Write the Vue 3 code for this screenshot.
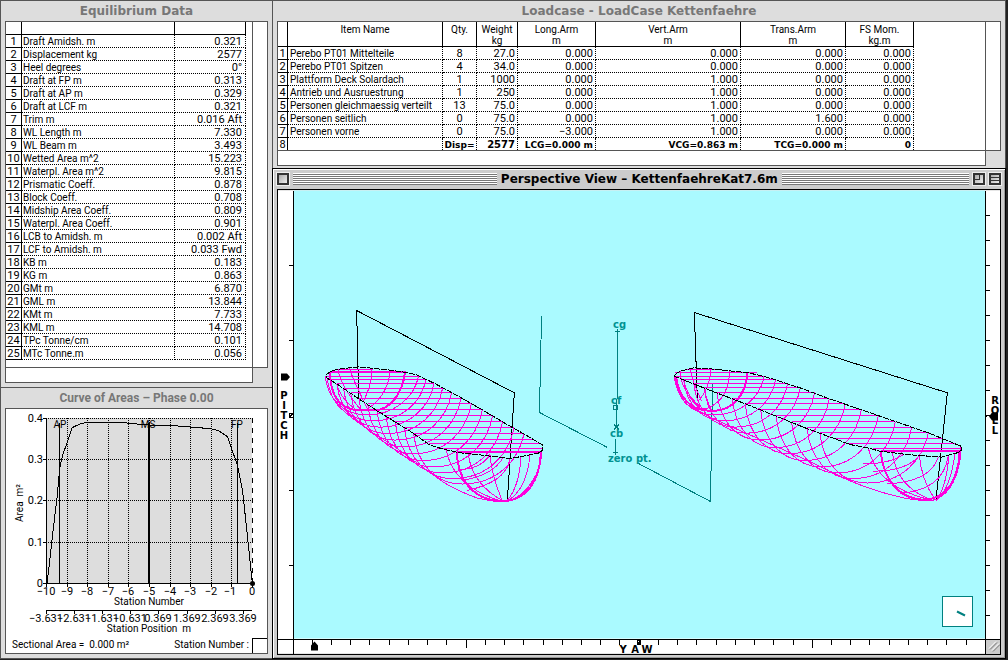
<script setup>
const equilibrium = [
  ['Draft Amidsh. m', '0.321'], ['Displacement kg', '2577'], ['Heel degrees', '0°'],
  ['Draft at FP m', '0.313'], ['Draft at AP m', '0.329'], ['Draft at LCF m', '0.321'],
  ['Trim m', '0.016 Aft'], ['WL Length m', '7.330'], ['WL Beam m', '3.493'],
  ['Wetted Area m^2', '15.223'], ['Waterpl. Area m^2', '9.815'], ['Prismatic Coeff.', '0.878'],
  ['Block Coeff.', '0.708'], ['Midship Area Coeff.', '0.809'], ['Waterpl. Area Coeff.', '0.901'],
  ['LCB to Amidsh. m', '0.002 Aft'], ['LCF to Amidsh. m', '0.033 Fwd'], ['KB m', '0.183'],
  ['KG m', '0.863'], ['GMt m', '6.870'], ['GML m', '13.844'], ['KMt m', '7.733'],
  ['KML m', '14.708'], ['TPc Tonne/cm', '0.101'], ['MTc Tonne.m', '0.056'],
]

const loadHead = [
  ['Item Name', ''], ['Qty.', ''], ['Weight', 'kg'], ['Long.Arm', 'm'],
  ['Vert.Arm', 'm'], ['Trans.Arm', 'm'], ['FS Mom.', 'kg.m'],
]
const loads = [
  ['Perebo PT01 Mittelteile', '8', '27.0', '0.000', '0.000', '0.000', '0.000'],
  ['Perebo PT01 Spitzen', '4', '34.0', '0.000', '0.000', '0.000', '0.000'],
  ['Plattform Deck Solardach', '1', '1000', '0.000', '1.000', '0.000', '0.000'],
  ['Antrieb und Ausruestrung', '1', '250', '0.000', '1.000', '0.000', '0.000'],
  ['Personen gleichmaessig verteilt', '13', '75.0', '0.000', '1.000', '0.000', '0.000'],
  ['Personen seitlich', '0', '75.0', '0.000', '1.000', '1.600', '0.000'],
  ['Personen vorne', '0', '75.0', '−3.000', '1.000', '0.000', '0.000'],
  ['', 'Disp=', '2577', 'LCG=0.000 m', 'VCG=0.863 m', 'TCG=0.000 m', '0'],
]

const gridX = [67, 87, 108, 128, 149, 170, 190, 211, 231]
const gridY = [[418, '0.4'], [459, '0.3'], [500, '0.2'], [542, '0.1'], [583, '0']]
const stations = [[46, '−10'], [67, '−9'], [87, '−8'], [108, '−7'], [128, '−6'], [149, '−5'], [170, '−4'], [190, '−3'], [211, '−2'], [230, '−1'], [252, '0']]
const positions = [[46, '−3.631'], [74, '−2.631'], [102, '−1.631'], [130, '−0.631'], [158, '0.369'], [187, '1.369'], [215, '2.369'], [243, '3.369']]

const yawTicks = Array.from({ length: 35 }, (_, i) => ({ x: Math.round(311.8 + i * 19.23), long: i === 8 || i === 26 }))
const pitchTicks = [264, 339, 489, 564]
const rollTicks = [214, 239, 264, 289, 314, 339, 364, 389, 439, 464, 489, 514, 539, 564, 589, 614]

/* One transverse section: a U hung between the port and starboard deck edges. */
function section(l, r, y, d) {
  const w = r - l
  return `M${r} ${y}C${r - 0.05 * w} ${y + 0.55 * d} ${l + 0.75 * w} ${y + d} ${l + 0.44 * w} ${y + d}` +
    `C${l + 0.2 * w} ${y + d} ${l + 0.03 * w} ${y + 0.6 * d} ${l} ${y}`
}
function hullMesh(slopeL, xL, yL, tops) {
  const depth = i => 116 + i * 2.3 + 20 * Math.sin(Math.PI * i / 13)
  const us = tops.map(([x, y], i) => section(xL + (y - yL) * slopeL, x, y, depth(i)))
  const deck = tops.map(([x, y]) => `M${xL + (y - yL) * slopeL} ${y}H${x}`)
  return us.slice(0, 12).join('') + deck.join('')
}

const hulls = [
  {
    at: 'translate(310 300) scale(.33333)',
    mesh: hullMesh(1.535, 50, 230, [[326, 227], [348, 238], [372, 250], [398, 263], [425, 277], [453, 293], [484, 310], [517, 328], [548, 346], [578, 364], [612, 382], [642, 400], [666, 416], [690, 430]]),
    extra: 'M75 208H190M385 445H697' +
      'M85 207Q88 250 150 325M118 203Q130 240 175 330M185 204Q188 250 160 302M240 210Q234 290 165 330M80 250Q90 290 130 322' +
      'M408 446Q430 560 575 602M475 460Q485 550 580 602M540 462Q544 520 575 597M540 462Q515 505 445 508M600 474Q590 545 470 570M633 468Q628 560 590 602M660 463Q650 570 590 602M580 470Q550 525 455 540',
    keel: 'M50 225Q60 300 100 330Q150 375 245 432L400 545Q450 575 500 592Q560 607 590 603Q640 590 668 540Q695 500 695 452',
    thick: 'M60 216H285C277 280 240 329 190 330H140C85 320 62 285 60 216M440 455H695M440 455C445 550 500 602 580 602C650 600 690 540 693 455',
    outline: 'M50 222L60 214L80 207L118 202L146 199L185 203L240 209L290 216L320 223L380 252L450 290L515 327L605 380L650 405L697 433V450L685 458L640 467L600 474L550 468L500 462L450 457L400 446L360 434L300 392L205 333L145 294L80 250L50 232Z',
    frame: 'M146 294L140 30L613 277L592 600',
  },
  {
    at: 'translate(660 300) scale(.33333)',
    mesh: hullMesh(2.57, 45, 228, [[313, 227], [347, 238], [383, 250], [421, 262], [464, 277], [508, 295], [556, 310], [604, 328], [655, 346], [706, 364], [755, 382], [805, 397], [850, 415], [885, 430]]),
    extra: 'M80 207H170M45 217H290M640 445H905' +
      'M60 212Q66 280 125 328M90 205Q100 250 125 302M152 204Q152 260 115 302M209 210Q206 310 125 328M72 240Q80 290 130 325M135 265Q135 290 155 330' +
      'M625 443Q650 560 810 598M697 456Q710 560 815 598M778 465Q785 540 825 597M778 465Q740 512 640 512M835 470Q810 545 680 550M866 466Q860 560 828 600M885 460Q870 570 828 600M730 462Q690 490 610 490M865 465Q850 570 720 578',
    keel: 'M45 225Q55 300 90 317Q150 352 240 390L450 483L560 537Q650 575 730 592Q790 604 825 598Q870 580 890 520Q903 480 903 440',
    thick: 'M48 226C55 290 90 330 150 331C220 335 258 280 262 217M662 453H903M662 453C670 530 710 598 800 598C860 590 895 540 899 453',
    outline: 'M45 222L60 212L90 205L100 202L152 205L265 217L313 228L347 238L420 262L508 295L605 328L706 363L805 397L905 438V448L895 456L845 470L740 462L660 452L625 443L570 432L525 415L435 382L346 346L256 310L172 278L100 250L45 228Z',
    frame: 'M112 298L103 36L862 277L828 598',
  },
]
</script>

<template>
  <main class="desktop">
    <div class="column">
      <section class="window">
        <h2 class="title">Equilibrium Data</h2>
        <div class="sheet">
          <div class="sheet-main equil">
            <table>
              <colgroup><col class="c16"><col><col class="c71"></colgroup>
              <thead><tr><th></th><th></th><th></th></tr></thead>
              <tbody>
                <tr v-for="(row, i) in equilibrium" :key="row[0]">
                  <th scope="row">{{ i + 1 }}</th><td>{{ row[0] }}</td><td class="num">{{ row[1] }}</td>
                </tr>
              </tbody>
            </table>
          </div>
          <div class="sheet-right"></div>
          <div class="sheet-bottom"></div>
        </div>
      </section>

      <section class="window curve">
        <h2 class="title narrow">Curve of Areas – Phase 0.00</h2>
        <div class="chart-box">
          <svg class="chart" viewBox="6 409 261 229" role="img" aria-label="Curve of areas">
            <rect x="46" y="418" width="206" height="165" fill="#ddd" />
            <g class="ink" stroke-dasharray="1 1">
              <path v-for="x in gridX" :key="x" :d="`M${x + 0.5} 418V583`" />
              <path v-for="g in gridY.slice(0, 4)" :key="g[0]" :d="`M46 ${g[0] + 0.5}H252`" />
            </g>
            <g class="ink">
              <path d="M46.5 418V583.5H253M59.5 423V583M237.5 423V583" />
              <path d="M149 423V583" stroke-width="2" />
              <path v-for="g in gridY" :key="g[0]" :d="`M43 ${g[0] + 0.5}H46`" />
              <path v-for="s in [46, ...gridX, 252]" :key="s" :d="`M${s + 0.5} 583V587`" />
              <path d="M252.5 418V583" stroke-dasharray="5 5" />
              <path d="M46 610.5H252" />
              <path v-for="p in positions" :key="p[0]" :d="`M${p[0] + 0.5} 610V614`" />
              <path transform="translate(0 385) scale(.33333)" vector-effect="non-scaling-stroke"
                d="M141 595L150 520L160 430L172 330L179 250L188 210L203 168L216 128L240 117L262 112H360L400 116L445 120L510 121L570 126L632 131L655 137L683 155L697 197L712 240L728 320L742 450L757 595" />
            </g>
            <circle cx="252.5" cy="583.5" r="2.5" />
            <text v-for="g in gridY" :key="g[1]" class="digits" x="43" :y="g[0] + 4" text-anchor="end">{{ g[1] }}</text>
            <g text-anchor="middle">
              <text x="60" y="428">AP</text><text x="148" y="428">MS</text><text x="237" y="428">FP</text>
              <text v-for="s in stations" :key="s[1]" class="digits" :x="s[0]" y="595">{{ s[1] }}</text>
              <text v-for="p in positions" :key="p[1]" class="digits" :x="p[0]" y="622">{{ p[1] }}</text>
              <text x="149" y="605">Station Number</text>
              <text x="149" y="632">Station Position&nbsp; m</text>
              <text transform="translate(23 503) rotate(-90)">Area&nbsp; m²</text>
            </g>
          </svg>
          <div class="readout">
            <span class="area">Sectional Area =&nbsp; 0.000 m²</span>
            <label for="station">Station Number :</label>
            <input id="station" type="text">
          </div>
        </div>
      </section>
    </div>

    <div class="column">
      <section class="window load">
        <h2 class="title">Loadcase - LoadCase Kettenfaehre</h2>
        <div class="sheet">
          <div class="sheet-main">
            <table class="loads">
              <colgroup><col class="c10"><col class="c155"><col class="c34"><col class="c41"><col class="c78"><col class="c145"><col class="c105"><col class="c68"></colgroup>
              <thead>
                <tr><th></th><th v-for="h in loadHead" :key="h[0]">{{ h[0] }}<br>{{ h[1] }}</th></tr>
              </thead>
              <tbody>
                <tr v-for="(row, i) in loads" :key="i">
                  <th scope="row">{{ i + 1 }}</th>
                  <td v-for="(c, j) in row" :key="j" :class="{ num: j > 1, qty: j === 1 }">{{ c }}</td>
                </tr>
              </tbody>
            </table>
          </div>
          <div class="sheet-right"></div>
          <div class="sheet-bottom"></div>
        </div>
      </section>

      <section class="persp">
        <header class="bar">
          <button class="box" aria-label="Close"></button>
          <i class="stripes wide"></i>
          <h2>Perspective View – KettenfaehreKat7.6m</h2>
          <i class="stripes"></i>
          <button class="box zoom" aria-label="Zoom"></button>
          <button class="box shade" aria-label="Collapse"></button>
        </header>
        <div class="view">
          <svg viewBox="278 190 722 463" role="img" aria-label="Perspective view of both hulls">
            <rect x="278" y="190" width="722" height="463" fill="#fff" />
            <rect x="294" y="190" width="691" height="448" fill="#aafaff" />
            <rect x="986" y="639" width="15" height="15" fill="#ccc" />
            <path class="ink" d="M293.5 190V653M278 638.5H1000M985.5 190V653" />
            <g class="ink">
              <path v-for="t in yawTicks" :key="t.x" :d="`M${t.x + 0.5} 639V${t.long ? 647 : 644}`" />
              <path v-for="y in pitchTicks" :key="y" :d="`M289 ${y + 0.5}H293`" />
              <path v-for="y in rollTicks" :key="y" :d="`M986 ${y + 0.5}H990`" />
              <path d="M289.5 412.5H293V416.5H289.5ZM290 416L293 413M637.5 639.5H640.5V643.5H637.5ZM638 643L641 640M986 416V414.5H990" />
            </g>
            <path d="M281 373H287L290 376.5L287 380H281ZM311 650V645L314.5 641L318 645V650ZM998 412V420H992L989 416L992 412Z" />
            <g class="tag" text-anchor="middle">
              <text v-for="(c, i) in 'PITCH'" :key="i" x="284" :y="398 + i * 10">{{ c }}</text>
              <text v-for="(c, i) in 'ROLL'" :key="i" x="995" :y="403 + i * 10">{{ c }}</text>
              <text x="623" y="652">Y</text><text x="635" y="652">A</text><text x="647" y="652">W</text>
            </g>

            <g class="teal">
              <path d="M541.5 316L539.5 412L607.5 447M638.5 463L710.5 501L712.5 384" />
              <path d="M617.5 331V372L616.5 427M615.5 438V449M615 330.5H620M617.5 328V333M613.5 404.5H617.5V408.5H613.5ZM614 424L619 429M619 424L614 429M613 451.5H618M615.5 449V454" />
            </g>
            <g class="mark">
              <text x="613" y="327">cg</text><text x="611" y="403">cf</text>
              <text x="610" y="436">cb</text><text x="608" y="461">zero pt.</text>
            </g>

            <g v-for="h in hulls" :key="h.at" class="hull" :transform="h.at">
              <path class="black" :d="h.frame" />
              <path :d="h.mesh" /><path :d="h.extra" /><path :d="h.keel" />
              <path class="bold" :d="h.thick" />
              <path class="black edge" :d="h.outline" />
            </g>

            <rect class="teal inset" x="942.5" y="595.5" width="30" height="30" />
            <path d="M957 611L965 615" stroke="#008080" stroke-width="2" />
            <path d="M989 648L996 641M992 650L999 643" stroke="#fff" stroke-width="1" />
            <path d="M990 649L997 642M993 651L1000 644" stroke="#777" stroke-width="1" />
          </svg>
        </div>
      </section>
    </div>
  </main>
</template>

<style>
body { margin: 0; background: #222; }
</style>

<style scoped>
.desktop {
  display: grid;
  grid-template-columns: 272px minmax(0, 1fr);
  min-height: 100vh;
  box-sizing: border-box;
  padding: 0 2px 2px 0;
  background: #222;
  color: #000;
  font: 10px/12px Roboto, "Liberation Sans", sans-serif;
}
.column { display: flex; flex-direction: column; min-width: 0; }
.window {
  box-sizing: border-box;
  background: #ddd;
  border: solid #555;
  border-width: 1px 0 0 1px;
  padding: 0 4px 4px;
}
.load { border-right-width: 1px; padding-bottom: 2px; }
.title {
  margin: 0;
  height: 20px;
  text-align: center;
  color: #777;
  font: bold 12px/20px "DejaVu Sans", sans-serif;
}
.narrow { font: bold 12px/20px Roboto, sans-serif; }

.sheet { display: grid; grid-template-columns: minmax(0, 1fr) 15px; grid-template-rows: auto 15px; }
.sheet > div { background: #fff; border: 0 solid #555; }
.sheet > .sheet-main { border-width: 1px; }
.sheet > .equil { padding: 0 6px 7px 0; }
.sheet > .sheet-right { border-width: 1px 1px 1px 0; }
.sheet > .sheet-bottom { border-width: 0 1px 1px; }

table { border-collapse: separate; border-spacing: 0; table-layout: fixed; width: 100%; }
.loads { width: 636px; }
.c16 { width: 16px; } .c71 { width: 71px; } .c10 { width: 10px; } .c155 { width: 155px; }
.c34 { width: 34px; } .c41 { width: 41px; } .c78 { width: 78px; } .c145 { width: 145px; }
.c105 { width: 105px; } .c68 { width: 68px; }
th, td {
  box-sizing: border-box;
  height: 13px;
  padding: 2px 0 0;
  white-space: nowrap;
  font-weight: normal;
  line-height: 10px;
  border: solid #000;
  border-width: 0 1px 1px 0;
}
thead th { vertical-align: top; line-height: 11px; }
tbody th { font-size: 11px; text-align: center; }
td { border-style: dotted; text-align: left; padding-left: 1px; }
.loads td { padding-left: 2px; }
td.num { font-size: 11px; text-align: right; padding-right: 3px; padding-left: 0; }
.loads td.num { padding-left: 0; padding-right: 2px; }
.loads td.qty { font-size: 11px; text-align: center; padding-left: 0; }
.loads tbody tr:last-child > * { height: 12px; border-bottom: 0; }
.loads tbody tr:last-child td { font: bold 9px/10px "DejaVu Sans", sans-serif; }
.loads tbody tr:last-child td:nth-child(4) { font-size: 10px; }

.curve { flex: 1; display: flex; flex-direction: column; border-bottom-width: 1px; }
.chart-box { flex: 1; display: flex; flex-direction: column; background: #fff; border: 1px solid #555; }
svg { display: block; width: 100%; flex: 1; min-height: 0; }
.readout { display: flex; height: 15px; line-height: 13px; padding-left: 6px; }
.area { flex: 1; }
.readout label { padding-right: 3px; }
.readout input {
  box-sizing: border-box;
  width: 15px;
  padding: 0;
  border: solid #000;
  border-width: 1px 0 0 1px;
  background: #fff;
  font: inherit;
  outline: 0;
}
.digits { font-size: 11px; }
.ink { fill: none; stroke: #000; stroke-width: 1; shape-rendering: crispEdges; }

.persp {
  flex: 1;
  display: flex;
  flex-direction: column;
  background: #ccc;
  border: 1px solid #000;
  box-shadow: inset 1px 1px #fff, inset -1px -1px #999;
  padding: 0 4px 3px;
}
.bar { display: flex; align-items: center; gap: 4px; height: 20px; }
.bar h2 { margin: 0; font: bold 12px/20px "DejaVu Sans", sans-serif; white-space: nowrap; }
.stripes { flex: 191; height: 12px; background: repeating-linear-gradient(#fff 0 1px, #777 1px 2px); }
.wide { flex-grow: 208; }
.box {
  position: relative;
  box-sizing: border-box;
  width: 12px;
  height: 12px;
  padding: 0;
  border: 2px solid #333;
  outline: 1px solid #eee;
  background: linear-gradient(135deg, #aaa, #eee);
}
.zoom::after { content: ""; position: absolute; inset: 0 3px 3px 0; border: solid #333; border-width: 0 1px 1px 0; }
.shade::after { content: ""; position: absolute; inset: 2px 0; border: solid #333; border-width: 1px 0; }
.view { flex: 1; display: flex; border: 1px solid #000; min-height: 0; }

.tag { font: bold 10px "DejaVu Sans", sans-serif; }
.teal { fill: none; stroke: #008080; stroke-width: 1; shape-rendering: crispEdges; }
.inset { fill: #fff; }
.mark { fill: #009292; font: bold 10px "DejaVu Sans", sans-serif; }
.hull path { fill: none; stroke: #f0d; stroke-width: 1; vector-effect: non-scaling-stroke; shape-rendering: crispEdges; }
.hull path.bold { stroke-width: 2; }
.hull path.black { stroke: #000; }
.hull path.edge { stroke-dasharray: 6 1; }
</style>
